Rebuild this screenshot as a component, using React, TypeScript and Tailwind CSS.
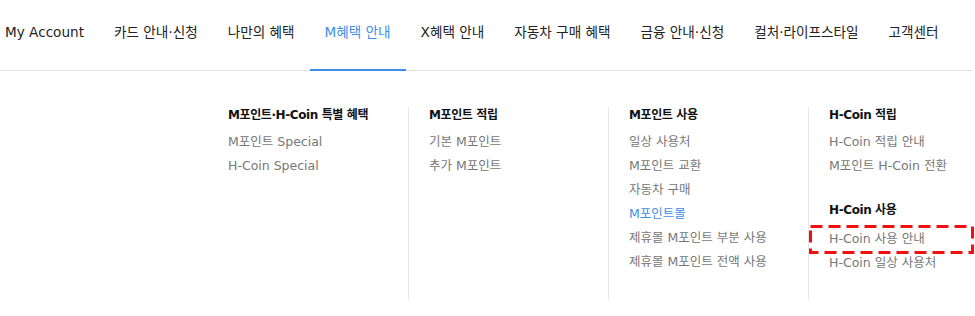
import React from "react";

const navItems = [
  "My Account",
  "카드 안내·신청",
  "나만의 혜택",
  "M혜택 안내",
  "X혜택 안내",
  "자동차 구매 혜택",
  "금융 안내·신청",
  "컬처·라이프스타일",
  "고객센터",
];

type Group = { title: string; items: string[] };

const columns: Group[][] = [
  [{ title: "M포인트·H-Coin 특별 혜택", items: ["M포인트 Special", "H-Coin Special"] }],
  [{ title: "M포인트 적립", items: ["기본 M포인트", "추가 M포인트"] }],
  [
    {
      title: "M포인트 사용",
      items: [
        "일상 사용처",
        "M포인트 교환",
        "자동차 구매",
        "M포인트몰",
        "제휴몰 M포인트 부분 사용",
        "제휴몰 M포인트 전액 사용",
      ],
    },
  ],
  [
    { title: "H-Coin 적립", items: ["H-Coin 적립 안내", "M포인트 H-Coin 전환"] },
    { title: "H-Coin 사용", items: ["H-Coin 사용 안내", "H-Coin 일상 사용처"] },
  ],
];

const App = () => {
  return (
    <div
      className="w-[975px] h-[316px] bg-white overflow-hidden"
      style={{ fontFamily: '"DejaVu Sans", "Noto Sans CJK KR", sans-serif' }}
    >
      {/* Top navigation */}
      <nav className="w-[973px] h-[71px] border-b border-[#e1e1e1] flex items-start">
        <ul className="flex -ml-[10px]">
          {navItems.map((item) => {
            const active = item === "M혜택 안내";
            return (
              <li
                key={item}
                className={`h-[71px] px-[15px] pt-[22px] text-[13.6px] leading-[20px] -mb-px ${
                  active
                    ? "text-[#3e8ee8] border-b-2 border-[#3e8ee8]"
                    : "text-[#222]"
                }`}
              >
                {item}
              </li>
            );
          })}
        </ul>
      </nav>

      {/* Mega menu */}
      <div className="flex pl-[208px] pt-[36px]">
        {columns.map((groups, ci) => (
          <div
            key={ci}
            className={`w-[200px] h-[193px] shrink-0 pl-5 ${
              ci === 0 ? "" : "border-l border-[#e6e6e6]"
            }`}
          >
            {groups.map((group, gi) => (
              <div key={group.title} className={gi > 0 ? "mt-[28px]" : ""}>
                <h4 className="text-[12px] font-bold text-[#111] leading-[17px] tracking-[-0.4px]">
                  {group.title}
                </h4>
                <ul
                  className={`flex flex-col gap-[7px] ${
                    gi > 0 ? "mt-[11px]" : "mt-[9px]"
                  }`}
                >
                  {group.items.map((it) => {
                    const active = it === "M포인트몰";
                    const marked = it === "H-Coin 사용 안내";
                    return (
                      <li
                        key={it}
                        className={`relative text-[12.5px] leading-[17px] ${
                          active ? "text-[#3e8ee8]" : "text-[#777]"
                        }`}
                      >
                        {it}
                        {marked && (
                          <svg
                            className="absolute left-[-20px] top-[-5px]"
                            width="165"
                            height="29"
                            viewBox="0 0 165 29"
                          >
                            <rect
                              x="1.5"
                              y="1.5"
                              width="162"
                              height="26"
                              fill="none"
                              stroke="#f01010"
                              strokeWidth="3"
                              strokeDasharray="12 6"
                            />
                          </svg>
                        )}
                      </li>
                    );
                  })}
                </ul>
              </div>
            ))}
          </div>
        ))}
      </div>
    </div>
  );
};

export default App;
